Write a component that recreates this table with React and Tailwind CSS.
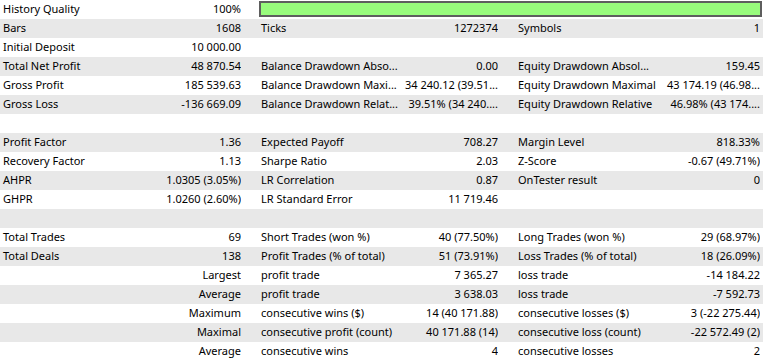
import React from "react";

const rows = [
  ["History Quality", "100%", "BAR"],
  ["Bars", "1608", "Ticks", "1272374", "Symbols", "1"],
  ["Initial Deposit", "10 000.00", "", "", "", ""],
  ["Total Net Profit", "48 870.54", "Balance Drawdown Abso...", "0.00", "Equity Drawdown Absol...", "159.45"],
  ["Gross Profit", "185 539.63", "Balance Drawdown Maxi...", "34 240.12 (39.51...", "Equity Drawdown Maximal", "43 174.19 (46.98..."],
  ["Gross Loss", "-136 669.09", "Balance Drawdown Relat...", "39.51% (34 240....", "Equity Drawdown Relative", "46.98% (43 174...."],
  ["", "", "", "", "", ""],
  ["Profit Factor", "1.36", "Expected Payoff", "708.27", "Margin Level", "818.33%"],
  ["Recovery Factor", "1.13", "Sharpe Ratio", "2.03", "Z-Score", "-0.67 (49.71%)"],
  ["AHPR", "1.0305 (3.05%)", "LR Correlation", "0.87", "OnTester result", "0"],
  ["GHPR", "1.0260 (2.60%)", "LR Standard Error", "11 719.46", "", ""],
  ["", "", "", "", "", ""],
  ["Total Trades", "69", "Short Trades (won %)", "40 (77.50%)", "Long Trades (won %)", "29 (68.97%)"],
  ["Total Deals", "138", "Profit Trades (% of total)", "51 (73.91%)", "Loss Trades (% of total)", "18 (26.09%)"],
  ["", "Largest", "profit trade", "7 365.27", "loss trade", "-14 184.22"],
  ["", "Average", "profit trade", "3 638.03", "loss trade", "-7 592.73"],
  ["", "Maximum", "consecutive wins ($)", "14 (40 171.88)", "consecutive losses ($)", "3 (-22 275.44)"],
  ["", "Maximal", "consecutive profit (count)", "40 171.88 (14)", "consecutive loss (count)", "-22 572.49 (2)"],
  ["", "Average", "consecutive wins", "4", "consecutive losses", "2"],
];

function Cell({ className, children }) {
  return (
    <div className={"shrink-0 overflow-hidden whitespace-nowrap " + className}>
      {children}
    </div>
  );
}

export default function App() {
  return (
    <div
      className="w-[763px] h-[361px] bg-white text-black text-[11px] leading-[17px]"
      style={{ fontFamily: '"Segoe UI", "Noto Sans", sans-serif' }}
    >
      {rows.map((r, i) => (
        <div
          key={i}
          className={
            "flex h-[19px] " + (i % 2 === 1 ? "bg-[#e8e8e8]" : "bg-white")
          }
        >
          <Cell className="w-[150px] pl-[3px]">{r[0]}</Cell>
          <Cell className="w-[91px] text-right">{r[1]}</Cell>
          {r[2] === "BAR" ? (
            <div className="ml-[18px] mr-[1px] mt-[1px] h-[16px] flex-1 border-2 border-[#5e5e5e] bg-[#98fb7c]" />
          ) : (
            <>
              <Cell className="w-[161px] pl-[20px]">{r[2]}</Cell>
              <Cell className="w-[96px] text-right">{r[3]}</Cell>
              <Cell className="w-[159px] pl-[20px]">{r[4]}</Cell>
              <Cell className="w-[103px] text-right">{r[5]}</Cell>
            </>
          )}
        </div>
      ))}
    </div>
  );
}
